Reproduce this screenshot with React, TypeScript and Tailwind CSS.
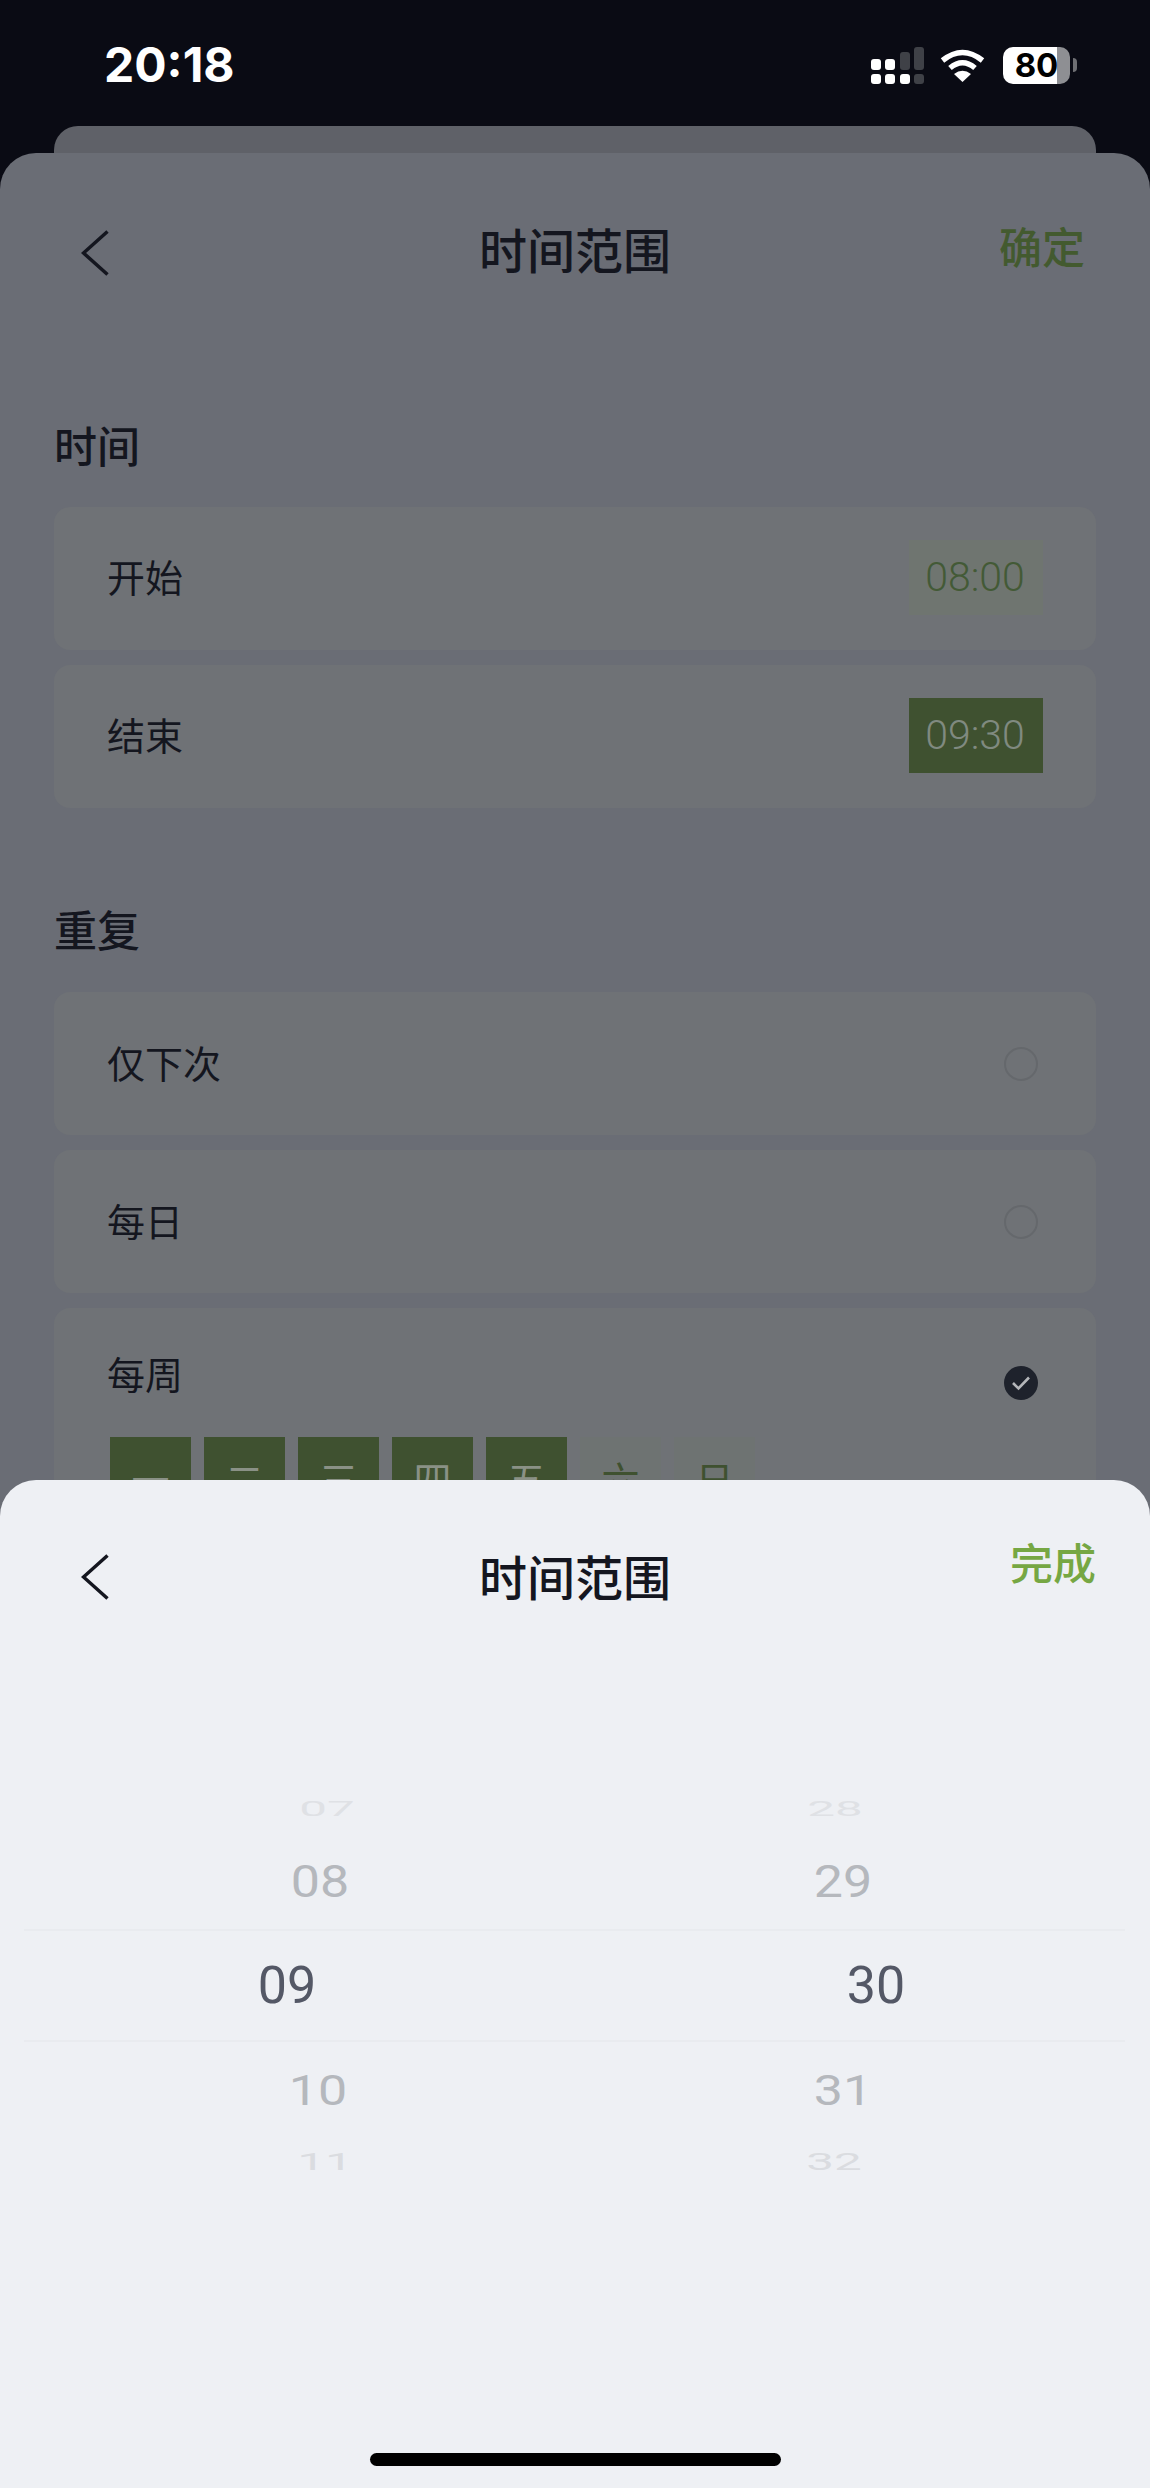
const selectedDays = ['一', '二', '三', '四', '五'];
const otherDays = ['六', '日'];

const wheelRows = [
  { hour: '07', minute: '28', height: 'h-[40px]', hourPos: 'ml-[267px]', minutePos: 'ml-[200px]', text: 'text-[#dfe1e5] scale-y-[0.38] scale-x-[0.95]' },
  { hour: '08', minute: '29', height: 'h-[100px]', hourPos: 'ml-[260px]', minutePos: 'ml-[208px]', text: 'mt-[6px] text-[#b5b8bd] scale-y-[0.84]' },
  { hour: '09', minute: '30', height: 'h-[111px]', hourPos: 'ml-[227px]', minutePos: 'ml-[241px]', text: 'text-[#545866]' },
  { hour: '10', minute: '31', height: 'h-[100px]', hourPos: 'ml-[258px]', minutePos: 'ml-[208px]', text: 'text-[#b5b8bd] scale-y-[0.81]' },
  { hour: '11', minute: '32', height: 'h-[42px]', hourPos: 'ml-[265px]', minutePos: 'ml-[199px]', text: 'text-[#dadce0] scale-y-[0.46] scale-x-[0.95]' },
];

function Chevron({ className }: { className: string }) {
  return (
    <svg width="28" height="46" viewBox="0 0 28 46" fill="none" className={className}>
      <path d="M26.5 1.5 L2.5 23 L26.5 44.5" stroke="#14161f" strokeWidth="3.5" />
    </svg>
  );
}

function Header({ right, chevron }: { right: React.ReactNode; chevron: string }) {
  return (
    <div className="grid h-[194px] grid-cols-[1fr_auto_1fr] items-center">
      <Chevron className={chevron} />
      <div className="mb-[5px] text-[48px] leading-none font-medium text-[#14161f]">时间范围</div>
      {right}
    </div>
  );
}

function SignalIcon() {
  return (
    <svg width="53" height="37" viewBox="0 0 53 37">
      <rect x="0" y="12" width="10" height="11" rx="3" fill="#fff" />
      <rect x="14" y="12" width="10" height="11" rx="3" fill="#fff" />
      <rect x="29" y="5" width="10" height="18" rx="3" fill="#3f4147" />
      <rect x="43" y="0" width="10" height="23" rx="3" fill="#3f4147" />
      <rect x="0" y="27" width="10" height="10" rx="3" fill="#fff" />
      <rect x="14" y="27" width="10" height="10" rx="3" fill="#fff" />
      <rect x="29" y="27" width="10" height="10" rx="3" fill="#fff" />
      <rect x="43" y="27" width="10" height="10" rx="3" fill="#3f4147" />
    </svg>
  );
}

function WifiIcon() {
  return (
    <svg width="45" height="34" viewBox="0 0 45 34" fill="none">
      <path d="M2.5 12.5 Q22.5 -3.5 42.5 12.5" stroke="#fff" strokeWidth="5.5" />
      <path d="M10 20 Q22.5 9.5 35 20" stroke="#fff" strokeWidth="5.5" />
      <path d="M14 26 Q22.5 19.5 31 26 L22.5 34 Z" fill="#fff" />
    </svg>
  );
}

function Battery() {
  return (
    <div className="flex items-center gap-[3px]">
      <div className="relative flex h-[37px] w-[67px]">
        <div className="flex-1 rounded-l-[10px] bg-white" />
        <div className="w-[13px] rounded-r-[10px] bg-[#8e8f93]" />
        <span className="absolute inset-0 flex items-center justify-center font-['Inter',sans-serif] text-[33px] leading-none font-bold text-black">
          80
        </span>
      </div>
      <div className="h-[14px] w-[4px] rounded-r-[4px] bg-[#6e6f73]" />
    </div>
  );
}

function StatusBar() {
  return (
    <div className="flex h-[126px] items-center justify-between pt-[4px] pr-[73px] pl-[104px]">
      <span className="font-['Inter',sans-serif] text-[48px] leading-none font-bold text-white">20:18</span>
      <div className="flex items-center">
        <SignalIcon />
        <div className="mr-[18px] ml-[16px]">
          <WifiIcon />
        </div>
        <Battery />
      </div>
    </div>
  );
}

function Radio() {
  return <div className="mr-[5px] h-[34px] w-[34px] rounded-full border-2 border-[#65686c]" />;
}

function Checked() {
  return (
    <div className="mt-[12px] mr-[5px] flex h-[34px] w-[34px] items-center justify-center rounded-full bg-[#1e222c]">
      <svg width="20" height="16" viewBox="0 0 20 16" fill="none">
        <path d="M2 8 L7.5 13.5 L18 2.5" stroke="#b4b6ba" strokeWidth="2.6" />
      </svg>
    </div>
  );
}

function Card({ children }: { children: React.ReactNode }) {
  return (
    <div className="flex h-[143px] items-center justify-between rounded-[16px] bg-[#6f7276] px-[53px] text-[38px] leading-none text-[#14161f]">
      {children}
    </div>
  );
}

function TimeRow({ label, time, box }: { label: string; time: string; box: string }) {
  return (
    <Card>
      <span className="mb-[5px]">{label}</span>
      <span className={`mb-[3px] flex h-[75px] w-[134px] items-center justify-center pr-[2px] font-['Roboto',sans-serif] text-[41px] font-light ${box}`}>
        {time}
      </span>
    </Card>
  );
}

function SectionTitle({ children, className }: { children: React.ReactNode; className: string }) {
  return <div className={`text-[43px] leading-none font-medium text-[#14161f] ${className}`}>{children}</div>;
}

function Wheel() {
  return (
    <div className="relative mt-[116px]">
      {wheelRows.map((row) => (
        <div
          key={row.hour}
          className={`grid grid-cols-[575px_575px] content-center items-center overflow-hidden font-['Roboto',sans-serif] text-[52px] leading-none ${row.height}`}
        >
          <div className={`w-[120px] text-center ${row.hourPos} ${row.text}`}>{row.hour}</div>
          <div className={`w-[120px] text-center ${row.minutePos} ${row.text}`}>{row.minute}</div>
        </div>
      ))}
      <div className="absolute top-[139px] right-[25px] left-[24px] h-[2px] bg-[#e9ebef]" />
      <div className="absolute top-[250px] right-[25px] left-[24px] h-[2px] bg-[#e9ebef]" />
    </div>
  );
}

export default function App() {
  return (
    <div className="relative flex h-[2488px] w-[1150px] flex-col overflow-hidden bg-[#0a0b14] font-['Noto_Sans_CJK_SC',sans-serif]">
      <StatusBar />
      <div className="mx-[54px] h-[27px] shrink-0 rounded-t-[24px] bg-[#5f6168]" />

      <div className="flex-1 rounded-t-[36px] bg-[#6a6d75]">
        <Header
          chevron="mt-[5px] ml-[81px]"
          right={<span className="mr-[65px] mb-[10px] justify-self-end text-[43px] leading-none font-medium text-[#435a2f]">确定</span>}
        />

        <div className="px-[54px]">
          <SectionTitle className="mt-[76px] mb-[41px]">时间</SectionTitle>
          <div className="flex flex-col gap-[15px]">
            <TimeRow label="开始" time="08:00" box="bg-[#6f7570] text-[#435a36]" />
            <TimeRow label="结束" time="09:30" box="bg-[#3f5130] text-[#808a80]" />
          </div>

          <SectionTitle className="mt-[99px] mb-[42px]">重复</SectionTitle>
          <div className="flex flex-col gap-[15px]">
            <Card>
              <span className="mb-[3px]">仅下次</span>
              <Radio />
            </Card>
            <Card>
              <span className="mb-[3px]">每日</span>
              <Radio />
            </Card>
            <div className="rounded-[16px] bg-[#6f7276] px-[53px] pt-[46px] pb-[40px] text-[38px] leading-none text-[#14161f]">
              <div className="flex h-[83px] items-start justify-between">
                <span>每周</span>
                <Checked />
              </div>
              <div className="ml-[3px] flex gap-[13px]">
                {selectedDays.map((day) => (
                  <div key={day} className="flex h-[81px] w-[81px] items-center justify-center bg-[#3f5130] text-[#8a9186]">
                    {day}
                  </div>
                ))}
                {otherDays.map((day) => (
                  <div key={day} className="flex h-[81px] w-[81px] items-center justify-center bg-[#6e7372] text-[#3f5130]">
                    {day}
                  </div>
                ))}
              </div>
            </div>
          </div>
        </div>
      </div>

      {/* bottom sheet over the page */}
      <div className="absolute inset-x-0 top-[1480px] bottom-0 rounded-t-[36px] bg-[#eef0f4]">
        <Header
          chevron="ml-[81px]"
          right={<span className="mr-[54px] mb-[32px] justify-self-end text-[43px] leading-none font-medium text-[#76a743]">完成</span>}
        />
        <Wheel />
        <div className="absolute bottom-[22px] left-[370px] h-[13px] w-[411px] rounded-full bg-black" />
      </div>
    </div>
  );
}
